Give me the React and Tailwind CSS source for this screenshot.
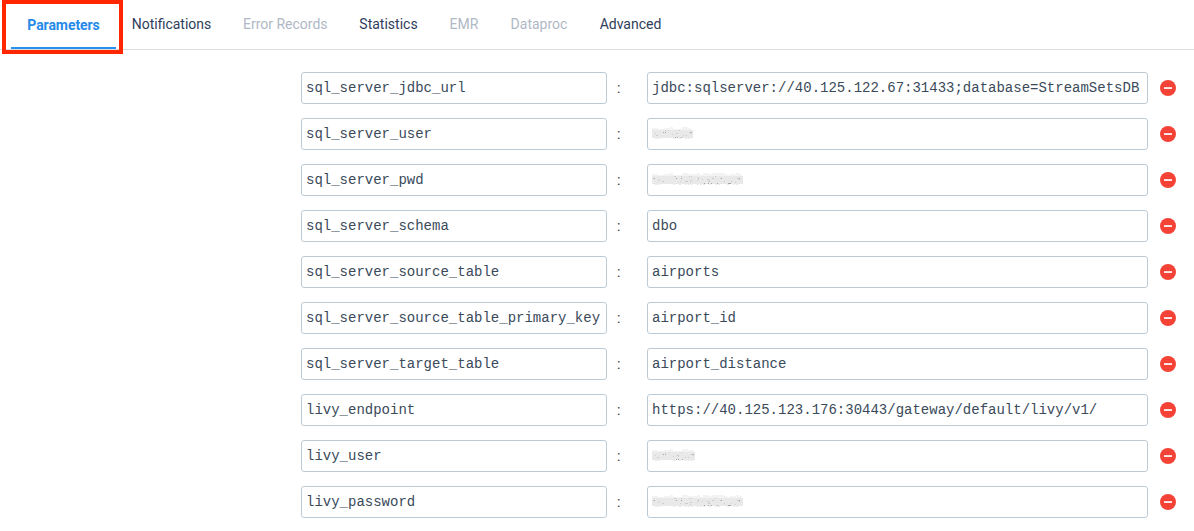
const tabs = [
  { label: 'Parameters', width: 'w-[105px]', active: true },
  { label: 'Notifications', width: 'w-[111px]' },
  { label: 'Error Records', width: 'w-[116.5px]', disabled: true },
  { label: 'Statistics', width: 'w-[90px]' },
  { label: 'EMR', width: 'w-[61px]', disabled: true },
  { label: 'Dataproc', width: 'w-[89px]', disabled: true },
  { label: 'Advanced', width: 'w-[94px]' },
];

const parameters = [
  { name: 'sql_server_jdbc_url', value: 'jdbc:sqlserver://40.125.122.67:31433;database=StreamSetsDB' },
  { name: 'sql_server_user', masked: 41 },
  { name: 'sql_server_pwd', masked: 91 },
  { name: 'sql_server_schema', value: 'dbo' },
  { name: 'sql_server_source_table', value: 'airports' },
  { name: 'sql_server_source_table_primary_key', value: 'airport_id' },
  { name: 'sql_server_target_table', value: 'airport_distance' },
  { name: 'livy_endpoint', value: 'https://40.125.123.176:30443/gateway/default/livy/v1/' },
  { name: 'livy_user', masked: 43 },
  { name: 'livy_password', masked: 91 },
];

// Repeatable pseudo-random value between 0 and 1.
const noise = (n) => {
  const s = Math.sin(n * 12.9898 + 4.1) * 43758.5453;
  return s - Math.floor(s);
};

// Grey smear with small speckles that hides a sensitive value.
function Smudge({ width }) {
  const columns = Array.from({ length: Math.floor(width / 3) }, (_, i) => i);
  const specks = Array.from({ length: Math.floor(width / 3.5) }, (_, i) => i);
  return (
    <svg width={width + 2} height="16" className="block -translate-y-px">
      <g fill="#f3f3f3">
        {columns.map((i) => (
          <rect key={i} x={i * 3} y={1 + Math.floor(noise(i) * 3)} width="3" height="6" />
        ))}
      </g>
      <rect x="0" y="4" width={width} height="8" fill="#e9e9e9" />
      <g fill="#e9e9e9">
        {columns.map((i) => (
          <rect key={i} x={i * 3} y="11" width="2" height={1 + Math.round(noise(i + 50))} />
        ))}
      </g>
      <g fill="#cbcdd0">
        {specks.map((i) => (
          <rect
            key={i}
            x={Math.floor(noise(i + 90) * (width - 2))}
            y={4 + Math.floor(noise(i + 140) * 7)}
            width={1 + Math.round(noise(i + 200))}
            height="1"
          />
        ))}
      </g>
      <g fill="#a2a7ad">
        {specks.filter((i) => i % 2 === 0).map((i) => (
          <rect key={i} x={Math.floor(noise(i + 300) * (width - 1))} y={i % 4 === 0 ? 11 : 6} width="1" height="1" />
        ))}
      </g>
    </svg>
  );
}

function Tab({ label, width, active, disabled }) {
  const tone = active
    ? 'font-bold tracking-[-0.005em] text-[#2589e8] border-[#2790ee] pt-1'
    : disabled
      ? 'font-normal text-[#b0b8c5] border-transparent pt-[2px]'
      : 'font-normal text-[#2f3d5c] border-transparent pt-[2px]';
  return (
    <div
      role="tab"
      className={`flex h-[49px] shrink-0 items-center justify-center border-b-2 whitespace-nowrap ${width} ${tone}`}
    >
      <span>{label}</span>
    </div>
  );
}

function RemoveIcon() {
  return (
    <svg width="16" height="16" viewBox="0 0 16 16" className="block">
      <circle cx="8" cy="8" r="8" fill="#f44336" />
      <rect x="4" y="7.2" width="8" height="1.7" fill="#fff" />
    </svg>
  );
}

const field =
  "flex h-8 items-center rounded-[3px] border border-[#bccad5] pl-1 pt-px font-['Liberation_Mono',monospace] text-[14px] whitespace-pre text-[#3a4a5a]";

function ParameterRow({ name, value, masked }) {
  return (
    <div className="flex h-8 items-center">
      <div className={`${field} w-[306px]`}>{name}</div>
      <div className="w-10 pl-[10px] text-[14px] text-[#333]">:</div>
      <div className={`${field} w-[501px]`}>{masked ? <Smudge width={masked} /> : value}</div>
      <button className="ml-3" aria-label="Remove">
        <RemoveIcon />
      </button>
    </div>
  );
}

export default function App() {
  return (
    <div className="relative h-[531px] w-[1194px] overflow-hidden bg-white font-['Roboto',sans-serif]">
      <div role="tablist" className="flex h-[50px] border-b border-[#dcdcdc] pl-[11px] text-[14px]">
        {tabs.map((tab) => (
          <Tab key={tab.label} {...tab} />
        ))}
      </div>
      <div className="flex flex-col gap-[14px] pt-[22px] pl-[301px]">
        {parameters.map((row) => (
          <ParameterRow key={row.name} {...row} />
        ))}
      </div>
      <div className="pointer-events-none absolute top-0 left-[2px] h-[54px] w-[121px] border-4 border-[#ff2600]" />
    </div>
  );
}
